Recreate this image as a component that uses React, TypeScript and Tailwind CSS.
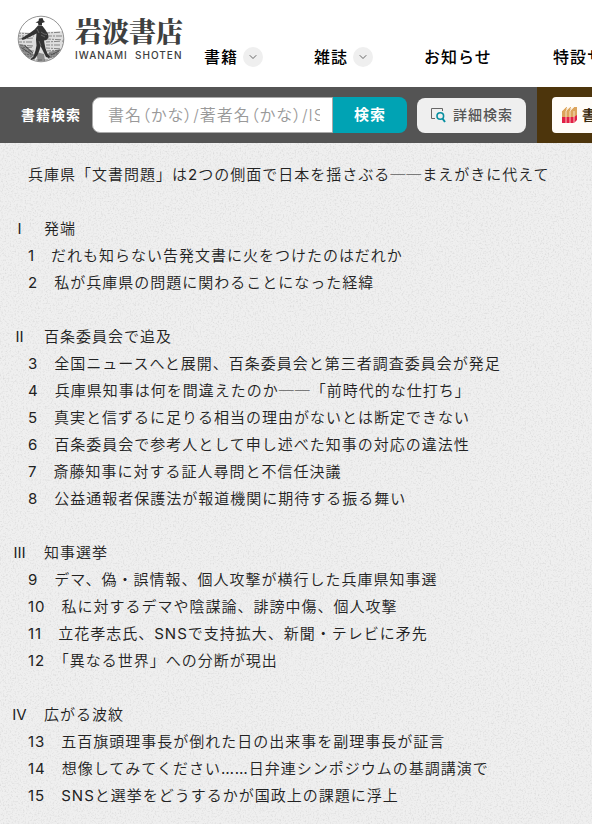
import { ChevronDown } from "lucide-react";

type Chapter = { numeral?: string; title?: string; lines: string[] };

const chapters: Chapter[] = [
  { lines: ["兵庫県「文書問題」は2つの側面で日本を揺さぶる──まえがきに代えて"] },
  {
    numeral: "Ⅰ",
    title: "発端",
    lines: ["1　だれも知らない告発文書に火をつけたのはだれか", "2　私が兵庫県の問題に関わることになった経緯"],
  },
  {
    numeral: "Ⅱ",
    title: "百条委員会で追及",
    lines: [
      "3　全国ニュースへと展開、百条委員会と第三者調査委員会が発足",
      "4　兵庫県知事は何を間違えたのか──「前時代的な仕打ち」",
      "5　真実と信ずるに足りる相当の理由がないとは断定できない",
      "6　百条委員会で参考人として申し述べた知事の対応の違法性",
      "7　斎藤知事に対する証人尋問と不信任決議",
      "8　公益通報者保護法が報道機関に期待する振る舞い",
    ],
  },
  {
    numeral: "Ⅲ",
    title: "知事選挙",
    lines: [
      "9　デマ、偽・誤情報、個人攻撃が横行した兵庫県知事選",
      "10　私に対するデマや陰謀論、誹謗中傷、個人攻撃",
      "11　立花孝志氏、SNSで支持拡大、新聞・テレビに矛先",
      "12　「異なる世界」への分断が現出",
    ],
  },
  {
    numeral: "Ⅳ",
    title: "広がる波紋",
    lines: [
      "13　五百旗頭理事長が倒れた日の出来事を副理事長が証言",
      "14　想像してみてください……日弁連シンポジウムの基調講演で",
      "15　SNSと選挙をどうするかが国政上の課題に浮上",
    ],
  },
];

const nav = [
  { label: "書籍", menu: true, width: "w-[110px]" },
  { label: "雑誌", menu: true, width: "w-[110px]" },
  { label: "お知らせ", menu: false, width: "w-[129px]" },
  { label: "特設サイト", menu: false, width: "w-[129px]" },
];

function SowerMark() {
  return (
    <svg viewBox="0 0 48 48" className="size-12 shrink-0" aria-hidden="true">
      <defs>
        <clipPath id="disc">
          <circle cx="24" cy="24" r="22.5" />
        </clipPath>
      </defs>
      <g clipPath="url(#disc)">
        <path d="M0 17l20 1 8-1 20-1v32H0z" fill="#dedede" />
        <path
          d="M0 18l18 1M29 18l19-1M0 21h17M31 21h17M2 24l15-1M30 24l18 1M1 27h16M29 27l19-1M2 30l15 1M29 30h18M1 33l16-1M29 33l18 1M3 36h14M30 36l16-1M5 39l12 1M31 39h13M8 42h9M31 42h11M11 45h24"
          stroke="#858585"
          strokeWidth="1"
          strokeDasharray="4 1 2 1 6 2"
        />
        <path d="M2 29l6 1 7 6 2 5-5 2-7-5zM19 37l8 2 1 7-7 1zM32 37l12-3-4 7-9 3z" fill="#4c4c4c" opacity=".55" />
        <path d="M5 33l9 6M8 31l8 7M34 40l8-4" stroke="#333" strokeWidth=".7" />
      </g>
      <circle cx="24" cy="24" r="22.8" fill="none" stroke="#666" strokeWidth=".7" />
      <path d="M18.500 7.500l3-1.500.5-2.500 3.500-.5 1 2.500 1.500 1.500-3 1 0 2.500-3.500 0-.5-2.500z" fill="#303030" />
      <path
        d="M21 10.500l4.500.5 3 4 2.500 4 .5 3.500-2 2.500-2.500.5 .5 3 1 5 2 5 2.500 3-1 1.500-3-1-4-8-1.500-3-1 4-2 5-2.500 3.500-3.500 1.500-1-1 3-2.500 2-6 1-5-.5-6 .5-6-6 3-5 2.500-3 1-1-2 3-1.500 6-4 4-3z"
        fill="#333"
      />
      <path d="M24 17l3 2 3 .5M24 20l4 2M22 26l2 5M20 14l2 4" stroke="#8a8a8a" strokeWidth=".6" fill="none" />
    </svg>
  );
}

function DetailIcon() {
  return (
    <svg viewBox="0 0 16 16" className="size-4" fill="none" aria-hidden="true">
      <path d="M5 11.500H1.500V1.500H12.500V4" stroke="#666" />
      <circle cx="10.300" cy="9" r="3.300" stroke="#078fa0" strokeWidth="1.600" />
      <path d="M12.500 11.500l2.500 3.500" stroke="#078fa0" strokeWidth="2" />
    </svg>
  );
}

function ShelfIcon() {
  return (
    <svg viewBox="0 0 16 16" className="size-4 shrink-0" aria-hidden="true">
      <path d="M0 4l4-4h1l-1 3 4-3h1l-1 3 4-3h3v9l-3 2H0z" fill="#dca45c" />
      <path d="M0 10h12l3-2v5l-3 3H0z" fill="#e22045" />
      <path d="M0 4l4-4M4 4l4-4M8 4l4-4M4 4v12M8 4v12M12 4v12" stroke="#fff3df" strokeWidth=".8" />
    </svg>
  );
}

function PaperTexture() {
  return (
    <svg className="pointer-events-none absolute inset-0 size-full" aria-hidden="true">
      <filter id="paper">
        <feTurbulence type="fractalNoise" baseFrequency="0.6" numOctaves="3" seed="4" />
        <feColorMatrix values="0 0 0 0 0.5  0 0 0 0 0.5  0 0 0 0 0.5  0.9 0 0 0 -0.43" />
      </filter>
      <rect width="100%" height="100%" filter="url(#paper)" />
    </svg>
  );
}

export default function App() {
  return (
    <div className="min-h-screen overflow-hidden bg-[#efefef] font-['Inter','Noto_Sans_CJK_JP',sans-serif] text-[#222]">
      <header className="flex h-[87px] bg-white">
        <a href="#" className="flex w-[204px] shrink-0 items-start gap-[10px] pt-[15px] pl-[17px] text-[#3e4040]">
          <SowerMark />
          <span className="flex flex-col gap-[2px]">
            <span className="font-['Noto_Serif_CJK_JP','Noto_Sans_CJK_JP',serif] text-[27px] leading-8 font-black">
              岩波書店
            </span>
            <span className="text-[10px] leading-3 font-medium tracking-[1px] whitespace-pre">IWANAMI  SHOTEN</span>
          </span>
        </a>
        <nav className="flex items-start pt-[47px]">
          {nav.map((item) => (
            <div key={item.label} className={`flex shrink-0 items-center gap-[5px] ${item.width}`}>
              <a href="#" className="text-base leading-5 font-medium tracking-[1px] whitespace-nowrap text-black">
                {item.label}
              </a>
              {item.menu && (
                <button
                  type="button"
                  aria-label={item.label + "メニュー"}
                  className="flex size-5 items-center justify-center rounded-full bg-[#efefef]"
                >
                  <ChevronDown className="size-3 text-[#666]" />
                </button>
              )}
            </div>
          ))}
        </nav>
      </header>

      <div className="flex h-14 bg-[#545454]">
        <form className="flex w-[537px] shrink-0 items-center pl-[21px]" onSubmit={(e) => e.preventDefault()}>
          <label htmlFor="keyword" className="w-[71px] text-sm font-bold tracking-[1px] whitespace-nowrap text-white">
            書籍検索
          </label>
          <input
            id="keyword"
            type="text"
            placeholder="書名（かな）/著者名（かな）/ISBN"
            className="h-9 w-[241px] rounded-l-lg border border-[#aaa] bg-white pr-3 pl-[15px] font-['Inter','Noto_Sans_CJK_JP_DemiLight','Noto_Sans_CJK_JP',sans-serif] text-base font-light tracking-[1px] [font-feature-settings:'palt'] placeholder:text-[#999]"
          />
          <button type="submit" className="h-9 w-[74px] rounded-r-lg bg-[#00a3b4] text-[15px] font-bold tracking-[1px] text-white">
            検索
          </button>
          <button
            type="button"
            className="ml-[10px] flex h-[35px] w-[109px] items-center justify-center gap-[7px] rounded-lg bg-[#efefef] text-sm font-medium tracking-[1px] text-[#555]"
          >
            <DetailIcon />
            詳細検索
          </button>
        </form>
        <div className="flex grow items-center bg-[#4d350c] pl-[15px]">
          <a
            href="#"
            className="flex h-9 shrink-0 items-center gap-1 rounded bg-[#fffcf8] px-[10px] text-sm font-bold tracking-[1px] whitespace-nowrap text-[#3a2a10]"
          >
            <ShelfIcon />
            書店の方へ
          </a>
        </div>
      </div>

      <main className="relative px-3 pt-[18px] pb-4">
        <PaperTexture />
        <div className="relative flex flex-col gap-[27px] font-['Inter','Noto_Sans_CJK_JP_DemiLight','Noto_Sans_CJK_JP',sans-serif] text-[15px] leading-[27px] tracking-[1px]">
          {chapters.map((chapter, i) => (
            <section key={i}>
              {chapter.title && (
                <h2 className="flex gap-4">
                  <span className="w-4 text-center">{chapter.numeral}</span>
                  {chapter.title}
                </h2>
              )}
              {chapter.lines.map((line) => (
                <p key={line} className="pl-4">
                  {line}
                </p>
              ))}
            </section>
          ))}
        </div>
      </main>
    </div>
  );
}
